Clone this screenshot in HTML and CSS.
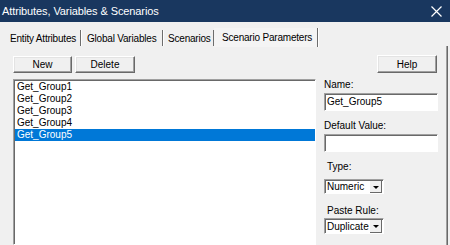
FILE: index.html
```html
<!DOCTYPE html>
<html lang="en">
<head>
  <meta charset="UTF-8">
  <title>Attributes, Variables &amp; Scenarios</title>
  <link rel="stylesheet" href="styles.css">
</head>
<body>
  <div class="titlebar">
    <span class="title">Attributes, Variables &amp; Scenarios</span>
    <svg class="close" width="11" height="11" viewBox="0 0 11 11">
      <path d="M0.5 0.5 L10.5 10.5 M10.5 0.5 L0.5 10.5" stroke="#fff" stroke-width="1.2" fill="none"/>
    </svg>
  </div>

  <div class="tabs">
    <div class="tab tab-entity">Entity Attributes</div>
    <div class="tab tab-global">Global Variables</div>
    <div class="tab tab-scen">Scenarios</div>
    <div class="tab active">Scenario Parameters</div>
  </div>

  <main class="panel">
    <section class="left">
      <div class="toolbar">
        <button class="btn btn-new">New</button>
        <button class="btn btn-delete">Delete</button>
      </div>
      <ul class="list">
        <li>Get_Group1</li>
        <li>Get_Group2</li>
        <li>Get_Group3</li>
        <li>Get_Group4</li>
        <li class="selected">Get_Group5</li>
      </ul>
    </section>

    <section class="right">
      <div class="help-row"><button class="btn btn-help">Help</button></div>

      <div class="label lbl-name">Name:</div>
      <div class="input">Get_Group5</div>

      <div class="label lbl-default">Default Value:</div>
      <div class="input"></div>

      <div class="label lbl-type">Type:</div>
      <div class="combo combo-type">
        <span class="combo-text">Numeric</span>
        <span class="combo-btn"><i class="arrow"></i></span>
      </div>

      <div class="label lbl-paste">Paste Rule:</div>
      <div class="combo combo-paste">
        <span class="combo-text">Duplicate</span>
        <span class="combo-btn"><i class="arrow"></i></span>
      </div>
    </section>
  </main>
</body>
</html>
```

FILE: styles.css
```css
:root {
  --face: #f0f0f0;
  --shadow: #a0a0a0;
  --dark: #696969;
  --light: #e3e3e3;
  --select: #0078d7;
  --title: #19375f;
}

* {
  box-sizing: border-box;
}

body {
  margin: 0;
  width: 450px;
  height: 245px;
  overflow: hidden;
  background: var(--face);
  font-family: 'Liberation Sans', Arial, sans-serif;
  font-size: 10px;
  color: #000;
}

.titlebar {
  height: 22px;
  background: var(--title);
  color: #fff;
  display: flex;
  align-items: center;
  justify-content: space-between;
  padding: 0 8px 0 2px;
  font-size: 11px;
  letter-spacing: -0.1px;
}

.close {
  display: block;
}

/* tabs */
.tabs {
  height: 24px;
  display: flex;
  align-items: flex-end;
  padding-left: 6px;
  letter-spacing: -0.2px;
}

.tab {
  height: 16px;
  line-height: 18px;
  padding-left: 4px;
  border-right: 1px solid #6d6d6d;
  box-shadow: 1px 0 0 #fff;
  white-space: nowrap;
  overflow: hidden;
}

.tab-entity { width: 75px; }
.tab-global { width: 82px; padding-left: 6px; }
.tab-scen { width: 51px; padding-left: 5px; }

.tab.active {
  height: 19px;
  line-height: 20px;
  width: 104px;
  padding-left: 8px;
  margin-bottom: -1px;
  background: #f4f4f4;
}

/* panel */
.panel {
  display: flex;
  width: 448px;
  height: 199px;
  border-right: 1px solid var(--dark);
  box-shadow: inset -1px 0 0 var(--shadow);
}

.left {
  padding: 10px 0 0 13px;
  display: flex;
  flex-direction: column;
}

.toolbar {
  display: flex;
  gap: 3px;
}

.btn {
  height: 17px;
  padding: 0;
  background: var(--face);
  border: 1px solid;
  border-color: #fff var(--dark) var(--dark) #fff;
  box-shadow: inset -1px -1px 0 var(--shadow), inset 1px 1px 0 var(--light);
  font: inherit;
  color: #000;
}

.btn-new { width: 59px; }
.btn-delete { width: 60px; }

.list {
  margin: 6px 0 0;
  padding: 1px 0 0 1px;
  list-style: none;
  width: 303px;
  height: 190px;
  background: #fff;
  border: 1px solid;
  border-color: var(--shadow) #fff #fff var(--shadow);
  box-shadow: inset 1px 1px 0 var(--dark);
}

.list li {
  height: 12px;
  line-height: 12px;
  padding-left: 2px;
}

.list li.selected {
  background: var(--select);
  color: #fff;
}

.right {
  width: 114px;
  margin-left: 8px;
  padding-top: 9px;
  display: flex;
  flex-direction: column;
}

.help-row {
  display: flex;
  justify-content: flex-end;
  padding-right: 1px;
}

.btn-help {
  width: 60px;
  height: 18px;
}

.label {
  height: 12px;
  line-height: 12px;
  margin-bottom: 2px;
}

.lbl-name { margin-top: 6px; }
.lbl-default { margin-top: 9px; }
.lbl-type { margin-top: 9px; margin-bottom: 6px; padding-left: 3px; }
.lbl-paste { margin-top: 11px; margin-bottom: 1px; padding-left: 3px; }

.input {
  height: 18px;
  line-height: 16px;
  padding-left: 2px;
  background: #fff;
  border: 1px solid;
  border-color: var(--shadow) #fff #fff var(--shadow);
  box-shadow: inset 1px 1px 0 var(--dark);
}

.combo {
  width: 60px;
  height: 15px;
  display: flex;
  align-items: center;
  background: #fff;
  border: 1px solid;
  border-color: var(--shadow) #fff #fff var(--shadow);
  box-shadow: inset 1px 1px 0 var(--dark);
  padding: 1px 1px 0 2px;
}

.combo-paste {
  height: 16px;
}

.combo-text {
  flex: 1;
  line-height: 12px;
  white-space: nowrap;
  overflow: hidden;
}

.combo-btn {
  width: 13px;
  height: 100%;
  display: flex;
  align-items: center;
  justify-content: center;
  background: var(--face);
  border-left: 1px solid #fff;
  box-shadow: inset -1px -1px 0 var(--dark);
}

.arrow {
  width: 0;
  height: 0;
  border-left: 3px solid transparent;
  border-right: 3px solid transparent;
  border-top: 3px solid #000;
}
```
